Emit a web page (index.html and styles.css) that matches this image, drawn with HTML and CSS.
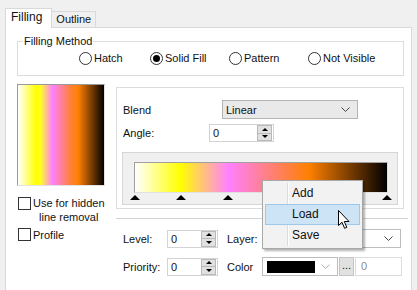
FILE: index.html
```html
<!DOCTYPE html>
<html>
<head>
  <title>Filling</title>
  <link rel="stylesheet" href="styles.css">
</head>
<body>
  <div class="tabs">
    <div class="tab active">Filling</div>
    <div class="tab">Outline</div>
  </div>

  <div class="panel">
    <fieldset class="method">
      <legend>Filling Method</legend>
      <div class="radios">
        <label class="radio"><span class="circle"></span>Hatch</label>
        <label class="radio"><span class="circle on"></span>Solid Fill</label>
        <label class="radio"><span class="circle"></span>Pattern</label>
        <label class="radio"><span class="circle"></span>Not Visible</label>
      </div>
    </fieldset>

    <div class="main">
      <div class="left">
        <div class="preview"></div>
        <label class="check"><span class="box"></span><span class="wrap">Use for hidden<br>line removal</span></label>
        <label class="check"><span class="box"></span>Profile</label>
      </div>

      <div class="right">
        <div class="gradgroup">
          <div class="row blend">
            <span class="lbl">Blend</span>
            <div class="select gray">Linear<svg class="chev" width="9" height="5"><polyline points="0.5,0.5 4.5,4.5 8.5,0.5" fill="none" stroke="#444" stroke-width="1"/></svg></div>
          </div>
          <div class="row angle">
            <span class="lbl">Angle:</span>
            <div class="spin"><span class="val">0</span><span class="btns"><span class="up"></span><span class="down"></span></span></div>
          </div>
          <div class="editor">
            <div class="bar">
              <span class="stop" style="left: 0%"></span>
              <span class="stop" style="left: 18.2%"></span>
              <span class="stop" style="left: 36.8%"></span>
              <span class="stop" style="left: 69%"></span>
              <span class="stop" style="left: 100%"></span>
            </div>
          </div>
        </div>

        <div class="props">
          <div class="prow">
            <span class="plbl">Level:</span>
            <div class="spin small"><span class="val">0</span><span class="btns"><span class="up"></span><span class="down"></span></span></div>
            <span class="plbl2">Layer:</span>
            <div class="select layer"><svg class="chev" width="9" height="5"><polyline points="0.5,0.5 4.5,4.5 8.5,0.5" fill="none" stroke="#444" stroke-width="1"/></svg></div>
          </div>
          <div class="prow">
            <span class="plbl">Priority:</span>
            <div class="spin small"><span class="val">0</span><span class="btns"><span class="up"></span><span class="down"></span></span></div>
            <span class="plbl2">Color</span>
            <div class="select color"><span class="swatch"></span><svg class="chev" width="9" height="5"><polyline points="0.5,0.5 4.5,4.5 8.5,0.5" fill="none" stroke="#b5b5b5" stroke-width="1"/></svg></div>
            <div class="dots">...</div>
            <div class="num">0</div>
          </div>
        </div>
      </div>
    </div>
  </div>

  <div class="menu">
    <div class="item">Add</div>
    <div class="item hot">Load</div>
    <div class="item">Save</div>
  </div>

  <svg class="cursor" width="13" height="20" viewBox="0 0 13 20">
    <path d="M0.5,0.5 L0.5,15.5 L4,12.2 L6.6,18.3 L8.8,17.4 L6.3,11.5 L11,11.5 Z" fill="#fff" stroke="#000" stroke-width="1" stroke-linejoin="miter"/>
  </svg>
</body>
</html>
```

FILE: styles.css
```css
html, body {
  margin: 0;
  padding: 0;
}

body {
  width: 417px;
  height: 290px;
  overflow: hidden;
  background: #f0f0f0;
  font-family: "Liberation Sans", Arial, sans-serif;
  font-size: 11px;
  color: #111;
  position: relative;
}

/* tabs */
.tabs {
  height: 27px;
  padding-left: 5px;
  display: flex;
  align-items: flex-end;
}

.tab {
  height: 15px;
  line-height: 15px;
  padding: 0 4px;
  border: 1px solid #d9d9d9;
  border-bottom: none;
  background: #f0f0f0;
  margin-left: -1px;
}

.tab.active {
  height: 19px;
  line-height: 17px;
  padding: 0 9px 0 5px;
  margin-left: 0;
  background: #fff;
  margin-bottom: -1px;
  position: relative;
  z-index: 1;
  font-size: 12px;
}

.panel {
  width: 407px;
  height: 270px;
  margin-left: 5px;
  border: 1px solid #d9d9d9;
  background: #fff;
  padding: 6px 9px 0 11px;
  box-sizing: border-box;
}

/* filling method */
.method {
  margin: 0;
  padding: 0 0 0 5px;
  border: 1px solid #dcdcdc;
  width: 387px;
  box-sizing: border-box;
}

.method legend {
  padding: 0 1px;
  line-height: 14px;
}

.radios {
  display: grid;
  grid-template-columns: 71px 79px 79px auto;
  margin: 2px 0 9px 56px;
  height: 16px;
}

.radio {
  display: flex;
  align-items: center;
}

.circle {
  width: 11px;
  height: 11px;
  border: 1px solid #333;
  border-radius: 50%;
  margin-right: 2px;
  display: flex;
  align-items: center;
  justify-content: center;
}

.circle.on::after {
  content: "";
  width: 7px;
  height: 7px;
  border-radius: 50%;
  background: #000;
}

/* main area */
.main {
  display: flex;
  margin-top: 8px;
}

.left {
  width: 88px;
  flex: none;
}

.preview {
  height: 102px;
  box-sizing: border-box;
  border: 1px solid;
  border-color: #9a9a9a #e3e3e3 #e3e3e3 #9a9a9a;
  background: linear-gradient(to right, #fff 0%, #ff0 21%, #ffff20 26%, #ff80ff 40%, #ff8040 60%, #ff8000 70%, #000 100%);
}

.check {
  display: flex;
  align-items: flex-start;
  margin-left: 1px;
  line-height: 14px;
  white-space: nowrap;
}

.check:first-of-type {
  margin-top: 11px;
}

.box {
  width: 11px;
  height: 11px;
  border: 1px solid #333;
  margin-right: 2px;
  flex: none;
}

.wrap {
  text-align: center;
  margin-top: -1px;
}

.check + .check {
  margin-top: 4px;
}

.right {
  margin-left: 11px;
  margin-top: 3px;
  width: 288px;
  flex: none;
}

.gradgroup {
  height: 122px;
  box-sizing: border-box;
  border: 1px solid #dcdcdc;
  padding: 12px 0 0 6px;
}

.row {
  display: flex;
  align-items: center;
}

.row .lbl {
  width: 99px;
}

.angle {
  margin-top: 5px;
}

.angle .lbl {
  width: 86px;
}

.select {
  height: 19px;
  box-sizing: border-box;
  border: 1px solid #bdbdbd;
  background: #fff;
  display: flex;
  align-items: center;
  padding-left: 3px;
  position: relative;
}

.select.gray {
  width: 136px;
  background: #e9e9e9;
  border-color: #b4b4b4;
}

.chev {
  margin-left: auto;
  margin-right: 7px;
}

.spin {
  width: 65px;
  height: 18px;
  box-sizing: border-box;
  border: 1px solid #d3d3d3;
  background: #fff;
  display: flex;
  align-items: center;
  padding-left: 3px;
}

.spin .val {
  flex: 1;
}

.btns {
  width: 15px;
  height: 16px;
  display: flex;
  flex-direction: column;
  margin-right: 1px;
}

.btns span {
  flex: 1;
  background: #e1e1e1;
  border: 1px solid #b9b9b9;
  display: flex;
  align-items: center;
  justify-content: center;
}

.btns .down {
  border-top: none;
}

.btns .up::after {
  content: "";
  border-left: 3px solid transparent;
  border-right: 3px solid transparent;
  border-bottom: 3px solid #000;
}

.btns .down::after {
  content: "";
  border-left: 3px solid transparent;
  border-right: 3px solid transparent;
  border-top: 3px solid #000;
}

.editor {
  width: 276px;
  height: 53px;
  margin: 10px 0 0 -1px;
  box-sizing: border-box;
  background: #f0f0f0;
  border: 1px solid #d6d6d6;
  padding: 9px 0 0 11px;
}

.bar {
  width: 254px;
  height: 31px;
  box-sizing: border-box;
  border: 1px solid;
  border-color: #a0a0a0 #e0e0e0 #e0e0e0 #a0a0a0;
  background: linear-gradient(to right, #fff 0%, #ff0 18%, #ff80ff 37%, #ff8000 69%, #000 100%);
  position: relative;
}

.stop {
  position: absolute;
  top: 32px;
  margin-left: -5px;
  border-left: 5px solid transparent;
  border-right: 5px solid transparent;
  border-bottom: 5px solid #000;
}

/* lower props */
.props {
  margin-top: 9px;
  width: 285px;
  border-top: 1px solid #d4d4d4;
  padding: 10px 0 0 7px;
}

.prow {
  display: flex;
  align-items: center;
  height: 19px;
}

.prow + .prow {
  margin-top: 9px;
}

.plbl {
  width: 44px;
}

.plbl2 {
  width: 35px;
  margin-left: 9px;
}

.spin.small {
  width: 51px;
}

.select.layer {
  width: 139px;
}

.select.color {
  width: 76px;
  padding-left: 4px;
}

.swatch {
  width: 48px;
  height: 12px;
  background: #000;
}

.dots {
  width: 15px;
  height: 19px;
  box-sizing: border-box;
  border: 1px solid #c4c4c4;
  background: #e1e1e1;
  margin-left: 1px;
  text-align: center;
  line-height: 15px;
  font-size: 11px;
}

.num {
  width: 47px;
  height: 19px;
  box-sizing: border-box;
  border: 1px solid #dcdcdc;
  margin-left: 1px;
  padding-left: 5px;
  line-height: 17px;
  color: #8a8a8a;
}

/* context menu */
.menu {
  position: absolute;
  left: 262px;
  top: 180px;
  width: 101px;
  box-sizing: border-box;
  padding: 2px;
  background: #f2f2f2;
  border: 1px solid #a8a8a8;
  box-shadow: 2px 2px 2px rgba(0, 0, 0, 0.3);
  font-size: 12px;
  z-index: 5;
}

.menu::before {
  content: "";
  position: absolute;
  left: 24px;
  top: 2px;
  bottom: 2px;
  border-left: 1px solid #dcdcdc;
  border-right: 1px solid #fff;
}

.item {
  height: 21px;
  line-height: 19px;
  padding-left: 26px;
  border: 1px solid transparent;
  box-sizing: border-box;
  position: relative;
}

.item.hot {
  background: #cde4f7;
  border-color: #9cc8ec;
}

.cursor {
  position: absolute;
  left: 338px;
  top: 210px;
  z-index: 6;
}
```
